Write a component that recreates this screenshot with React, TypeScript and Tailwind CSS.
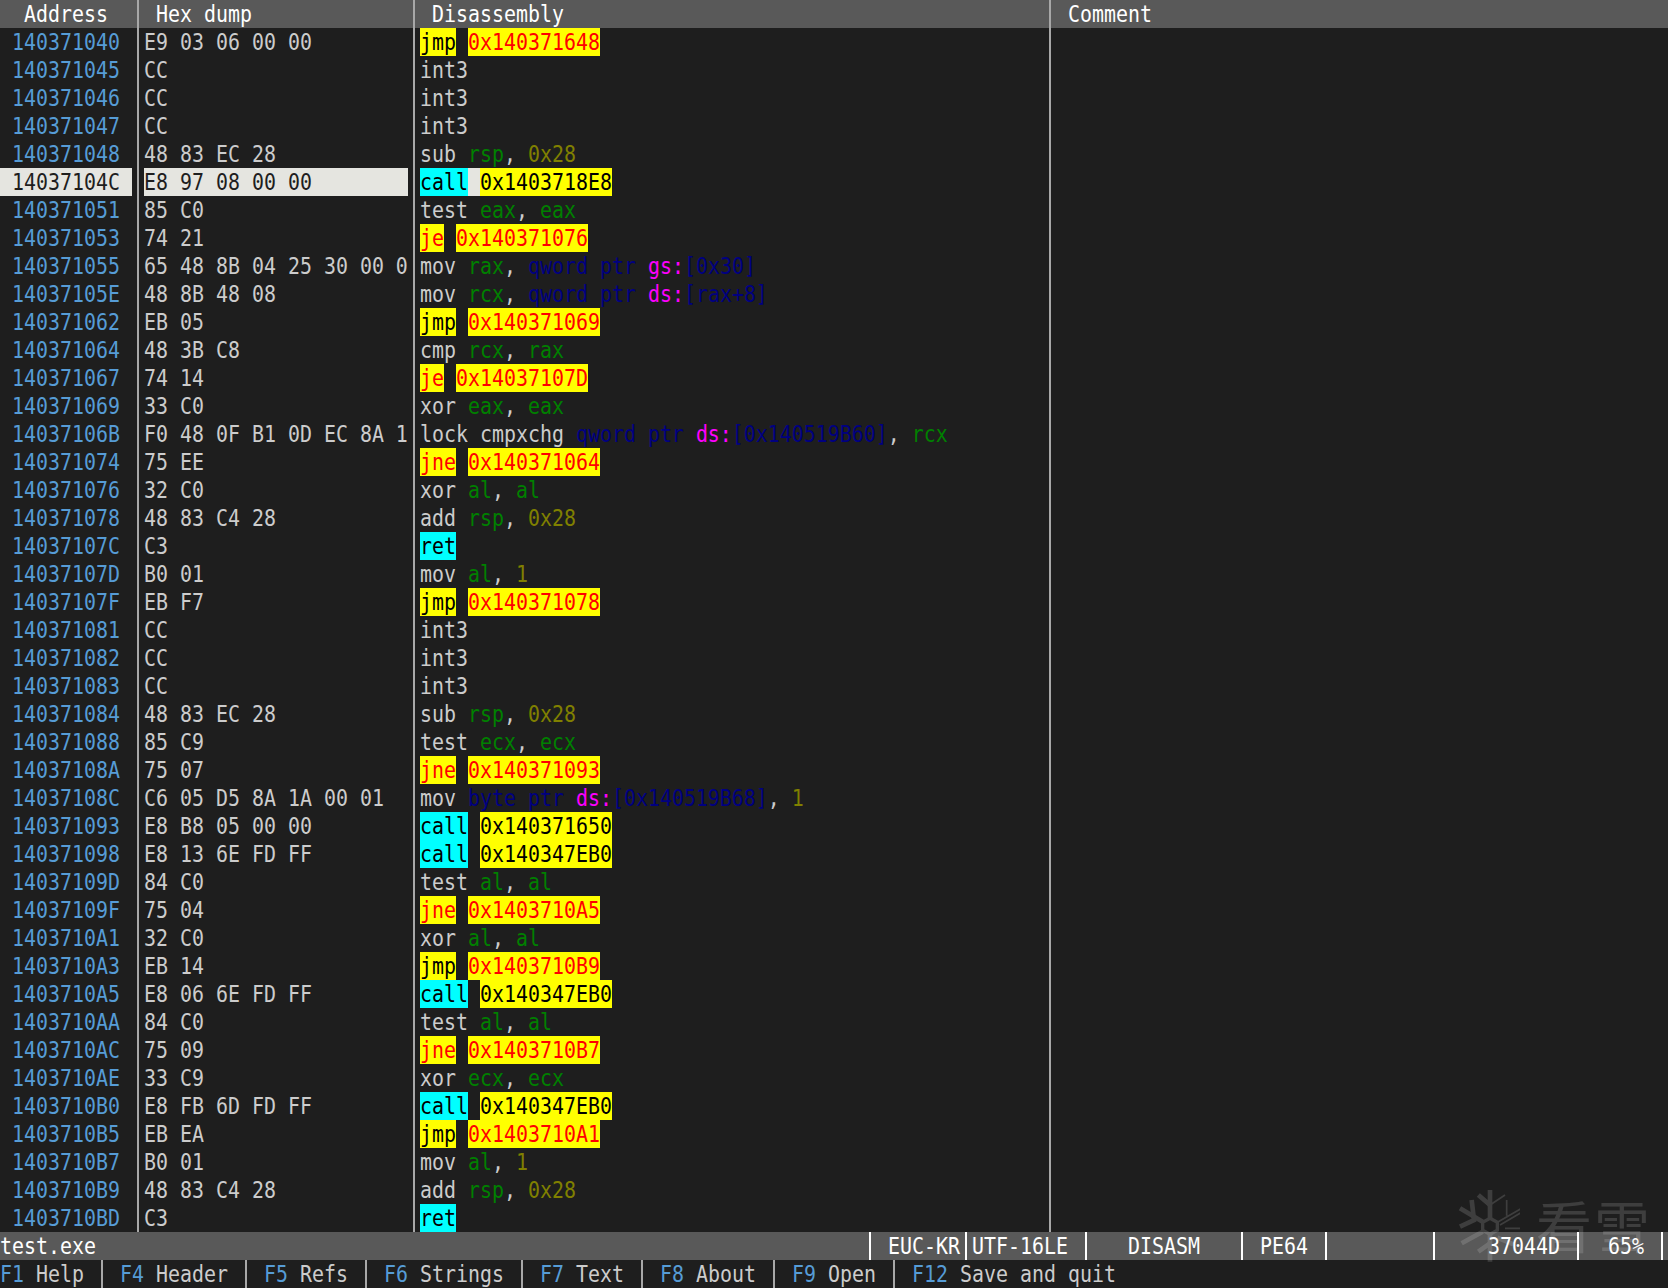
import React from 'react';

// token colours for the disassembly pane
const reg = 'text-[#008000]';
const num = 'text-[#808000]';
const ptr = 'text-[#000080]';
const seg = 'text-[#ff00ff]';

type Token = [string, string];

const Txt: React.FC<{ children: React.ReactNode }> = ({ children }) => (
  <span className="inline-block origin-center scale-y-[1.14] translate-y-px">{children}</span>
);

const Tok: React.FC<{ cls: string; text: string }> = ({ cls, text }) => (
  <span className={`inline-block h-7 ${cls}`}>
    <Txt>{text}</Txt>
  </span>
);

const plain = (s: string): Token => ['', s];
const r = (s: string): Token => [reg, s];
const n = (s: string): Token => [num, s];
const p = (s: string): Token => [ptr, s];
const d = (s: string): Token => [seg, s];

const jmp = (t: string): Token[] => [['bg-[#ffff00] text-black', 'jmp'], plain(' '), ['bg-[#ffff00] text-[#ff0000]', t]];
const je = (t: string): Token[] => [['bg-[#ffff00] text-[#ff0000]', 'je'], plain(' '), ['bg-[#ffff00] text-[#ff0000]', t]];
const jne = (t: string): Token[] => [['bg-[#ffff00] text-[#ff0000]', 'jne'], plain(' '), ['bg-[#ffff00] text-[#ff0000]', t]];
const call = (t: string): Token[] => [['bg-[#00ffff] text-black', 'call'], plain(' '), ['bg-[#ffff00] text-black', t]];
const ret: Token[] = [['bg-[#00ffff] text-black', 'ret']];
const int3: Token[] = [plain('int3')];
const two = (op: string, a: string, b: string): Token[] => [plain(op + ' '), r(a), plain(', '), r(b)];
const subRsp = (op: string): Token[] => [plain(op + ' '), r('rsp'), plain(', '), n('0x28')];
const movAl: Token[] = [plain('mov '), r('al'), plain(', '), n('1')];

const rows: [string, string, Token[]][] = [
  ['140371040', 'E9 03 06 00 00', jmp('0x140371648')],
  ['140371045', 'CC', int3],
  ['140371046', 'CC', int3],
  ['140371047', 'CC', int3],
  ['140371048', '48 83 EC 28', subRsp('sub')],
  ['14037104C', 'E8 97 08 00 00', [['bg-[#00ffff] text-black', 'call'], ['bg-[#e5e5e0]', ' '], ['bg-[#ffff00] text-black', '0x1403718E8']]],
  ['140371051', '85 C0', two('test', 'eax', 'eax')],
  ['140371053', '74 21', je('0x140371076')],
  ['140371055', '65 48 8B 04 25 30 00 0', [plain('mov '), r('rax'), plain(', '), p('qword ptr '), d('gs:'), p('[0x30]')]],
  ['14037105E', '48 8B 48 08', [plain('mov '), r('rcx'), plain(', '), p('qword ptr '), d('ds:'), p('[rax+8]')]],
  ['140371062', 'EB 05', jmp('0x140371069')],
  ['140371064', '48 3B C8', two('cmp', 'rcx', 'rax')],
  ['140371067', '74 14', je('0x14037107D')],
  ['140371069', '33 C0', two('xor', 'eax', 'eax')],
  ['14037106B', 'F0 48 0F B1 0D EC 8A 1', [plain('lock cmpxchg '), p('qword ptr '), d('ds:'), p('[0x140519B60]'), plain(', '), r('rcx')]],
  ['140371074', '75 EE', jne('0x140371064')],
  ['140371076', '32 C0', two('xor', 'al', 'al')],
  ['140371078', '48 83 C4 28', subRsp('add')],
  ['14037107C', 'C3', ret],
  ['14037107D', 'B0 01', movAl],
  ['14037107F', 'EB F7', jmp('0x140371078')],
  ['140371081', 'CC', int3],
  ['140371082', 'CC', int3],
  ['140371083', 'CC', int3],
  ['140371084', '48 83 EC 28', subRsp('sub')],
  ['140371088', '85 C9', two('test', 'ecx', 'ecx')],
  ['14037108A', '75 07', jne('0x140371093')],
  ['14037108C', 'C6 05 D5 8A 1A 00 01', [plain('mov '), p('byte ptr '), d('ds:'), p('[0x140519B68]'), plain(', '), n('1')]],
  ['140371093', 'E8 B8 05 00 00', call('0x140371650')],
  ['140371098', 'E8 13 6E FD FF', call('0x140347EB0')],
  ['14037109D', '84 C0', two('test', 'al', 'al')],
  ['14037109F', '75 04', jne('0x1403710A5')],
  ['1403710A1', '32 C0', two('xor', 'al', 'al')],
  ['1403710A3', 'EB 14', jmp('0x1403710B9')],
  ['1403710A5', 'E8 06 6E FD FF', call('0x140347EB0')],
  ['1403710AA', '84 C0', two('test', 'al', 'al')],
  ['1403710AC', '75 09', jne('0x1403710B7')],
  ['1403710AE', '33 C9', two('xor', 'ecx', 'ecx')],
  ['1403710B0', 'E8 FB 6D FD FF', call('0x140347EB0')],
  ['1403710B5', 'EB EA', jmp('0x1403710A1')],
  ['1403710B7', 'B0 01', movAl],
  ['1403710B9', '48 83 C4 28', subRsp('add')],
  ['1403710BD', 'C3', ret],
];

const SELECTED = '14037104C';

const headers = [
  { label: 'Address', cls: 'w-[139px] pl-[24px] border-r-2' },
  { label: 'Hex dump', cls: 'w-[276px] pl-[17px] border-r-2' },
  { label: 'Disassembly', cls: 'w-[636px] pl-[17px] border-r-2' },
  { label: 'Comment', cls: 'flex-1 pl-[17px]' },
];

const status = [
  { label: 'test.exe', cls: 'w-[871px]' },
  { label: 'EUC-KR', cls: 'w-[96px] pl-[17px]' },
  { label: 'UTF-16LE', cls: 'w-[120px] pl-[5px]' },
  { label: 'DISASM', cls: 'w-[156px] pl-[41px]' },
  { label: 'PE64', cls: 'w-[84px] pl-[17px]' },
  { label: '', cls: 'w-[108px]' },
  { label: '37044D', cls: 'w-[144px] pl-[53px]' },
  { label: '65%', cls: 'w-[84px] pl-[29px]' },
];

const keys = [
  { key: 'F1', label: ' Help', cls: 'w-[103px]' },
  { key: 'F4', label: ' Header', cls: 'w-[144px] pl-[17px]' },
  { key: 'F5', label: ' Refs', cls: 'w-[120px] pl-[17px]' },
  { key: 'F6', label: ' Strings', cls: 'w-[156px] pl-[17px]' },
  { key: 'F7', label: ' Text', cls: 'w-[120px] pl-[17px]' },
  { key: 'F8', label: ' About', cls: 'w-[132px] pl-[17px]' },
  { key: 'F9', label: ' Open', cls: 'w-[120px] pl-[17px]' },
];

const Watermark: React.FC = () => (
  <div className="absolute left-[1450px] top-[1185px] flex items-center gap-[16px] pointer-events-none opacity-[0.14]">
    <svg width="70" height="80" viewBox="0 0 210 240" fill="none" stroke="#ffffff" strokeWidth="14">
      <path d="M120 15V100M120 145V230M30 70L98 110M142 158L190 178M35 175L98 140" />
      <path d="M85 30L120 60L120 60M65 45L72 105L30 125M85 200L120 175" />
      <path d="M120 100L142 112V136L120 148L98 136V112Z" strokeWidth="10" />
      <path d="M120 60L165 30M145 110L215 70M150 120L215 82M170 45V92M165 130H215" strokeWidth="5" />
    </svg>
    <span className="font-['Noto_Sans_CJK_SC',sans-serif] text-[56px] leading-none text-white tracking-[2px] -mt-[2px]">看雪</span>
  </div>
);

export default function App() {
  return (
    <div className="relative flex flex-col w-[1668px] h-[1288px] overflow-hidden bg-[#1e1e1e] font-['DejaVu_Sans_Mono',monospace] text-[19.93px] leading-7 text-[#cccccc] whitespace-pre">
      <div className="flex h-7 bg-[#595959] text-white">
        {headers.map((h) => (
          <div key={h.label} className={`${h.cls} border-[#a8a8a8]`}>
            <Txt>{h.label}</Txt>
          </div>
        ))}
      </div>

      <div className="flex h-[1204px]">
        <div className="w-[139px] border-r-2 border-[#a8a8a8]">
          {rows.map(([addr]) => (
            <div key={addr} className={addr === SELECTED ? 'h-7 w-[132px] pl-[12px] bg-[#e5e5e0] text-[#1e1e1e]' : 'h-7 pl-[12px] text-[#569cd6]'}>
              <Txt>{addr}</Txt>
            </div>
          ))}
        </div>
        <div className="w-[276px] border-r-2 border-[#a8a8a8] pl-[5px]">
          {rows.map(([addr, hex]) => (
            <div key={addr} className={addr === SELECTED ? 'h-7 w-[264px] bg-[#e5e5e0] text-[#1e1e1e]' : 'h-7'}>
              <Txt>{hex}</Txt>
            </div>
          ))}
        </div>
        <div className="w-[636px] border-r-2 border-[#a8a8a8] pl-[5px]">
          {rows.map(([addr, , asm]) => (
            <div key={addr} className="flex h-7">
              {asm.map(([cls, text], i) => (
                <Tok key={i} cls={cls} text={text} />
              ))}
            </div>
          ))}
        </div>
      </div>

      <div className="flex h-7 bg-[#595959] text-white">
        {status.map((s, i) => (
          <div key={i} className={`${s.cls} border-r-2 border-white`}>
            <Txt>{s.label}</Txt>
          </div>
        ))}
      </div>

      <div className="flex h-7">
        {keys.map((k) => (
          <div key={k.key} className={`${k.cls} border-r-2 border-[#a8a8a8]`}>
            <Txt>
              <span className="text-[#569cd6]">{k.key}</span>
              {k.label}
            </Txt>
          </div>
        ))}
        <div className="pl-[17px]">
          <Txt>
            <span className="text-[#569cd6]">F12</span> Save and quit
          </Txt>
        </div>
      </div>

      <Watermark />
    </div>
  );
}
